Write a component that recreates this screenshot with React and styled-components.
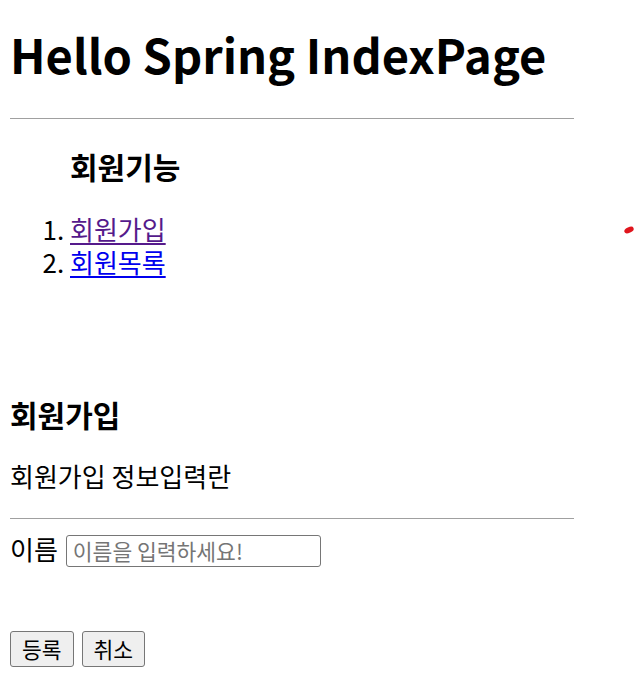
import styled, { createGlobalStyle } from "styled-components";

const GlobalStyle = createGlobalStyle`
  body {
    margin: 0;
    background: #ffffff;
    color: #000000;
    font-family: "Noto Sans CJK KR", "Noto Sans", sans-serif;
  }
`;

const Page = styled.div`
  position: relative;
  padding: 0 10px;
  font-size: 26px;
  line-height: 32px;
  min-height: 676px;
  box-sizing: border-box;
`;

const Title = styled.h1`
  margin: 22px 0 32px;
  font-size: 47px;
  line-height: 64px;
  font-weight: 700;
`;

const Rule = styled.hr`
  width: 564px;
  height: 0;
  margin: 0;
  border: none;
  border-top: 1px solid #a0a0a0;
`;

const Menu = styled.section`
  padding-left: 60px;
`;

const Heading = styled.h3`
  margin: ${(p) => p.$top}px 0 0;
  font-size: 30px;
  line-height: 37px;
  font-weight: 700;
`;

const List = styled.ol`
  margin: 27px 0 0;
  padding: 0;
  list-style: decimal outside;
  font-size: 26px;
  line-height: 33px;
`;

const Link = styled.a`
  color: ${(p) => (p.$visited ? "#551a8b" : "#0000ee")};
  text-decoration: underline;
  text-underline-offset: 3px;
`;

const Intro = styled.p`
  margin: 27px 0 26px;
`;

const FieldRow = styled.div`
  display: flex;
  align-items: baseline;
  gap: 8px;
  margin-top: 14px;
`;

const Label = styled.label`
  font-size: 26px;
`;

const TextInput = styled.input`
  box-sizing: border-box;
  width: 255px;
  height: 32px;
  padding: 0 6px;
  border: 1px solid #767676;
  border-radius: 3px;
  font-family: "Noto Sans CJK KR", "Noto Sans", sans-serif;
  font-size: 21.5px;
  &::placeholder {
    color: #757575;
  }
`;

const Buttons = styled.div`
  display: flex;
  gap: 8px;
  margin-top: 64px;
`;

const Button = styled.button`
  box-sizing: border-box;
  height: 36px;
  padding: 0 11px;
  background: #efefef;
  border: 1px solid #767676;
  border-radius: 3px;
  font-family: "Noto Sans CJK KR", "Noto Sans", sans-serif;
  font-size: 21.5px;
  color: #000;
`;

const Mark = styled.svg`
  position: absolute;
  left: 622px;
  top: 202px;
`;

export default function App() {
  return (
    <>
      <GlobalStyle />
      <Page>
        <Title>Hello Spring IndexPage</Title>
        <Rule />
        <Menu>
          <Heading $top={29}>회원기능</Heading>
          <List>
            <li>
              <Link href="#" $visited>회원가입</Link>
            </li>
            <li>
              <Link href="#">회원목록</Link>
            </li>
          </List>
        </Menu>
        <Heading $top={118}>회원가입</Heading>
        <Intro>회원가입 정보입력란</Intro>
        <Rule />
        <FieldRow>
          <Label>이름</Label>
          <TextInput placeholder="이름을 입력하세요!" />
        </FieldRow>
        <Buttons>
          <Button>등록</Button>
          <Button>취소</Button>
        </Buttons>
        <Mark width="14" height="12" viewBox="0 0 14 12">
          <ellipse cx="7" cy="6" rx="5" ry="2.8" fill="#e0151d" transform="rotate(-25 7 6)" />
        </Mark>
      </Page>
    </>
  );
}
